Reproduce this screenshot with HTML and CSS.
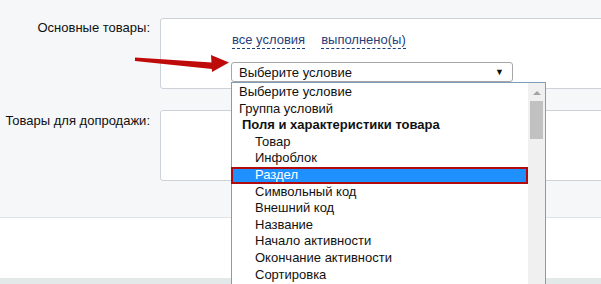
FILE: index.html
```html
<!DOCTYPE html>
<html lang="ru">
<head>
<meta charset="utf-8">
<link rel="stylesheet" href="styles.css">
</head>
<body>
<div class="page">
  <div class="form">
    <div class="row row-first">
      <div class="label">Основные товары:</div>
      <div class="box">
        <div class="links">
          <span class="link">все условия</span>
          <span class="link">выполнено(ы)</span>
        </div>
        <div class="select">
          <span>Выберите условие</span>
          <span class="caret">▼</span>
        </div>
      </div>
    </div>
    <div class="row row-second">
      <div class="label">Товары для допродажи:</div>
      <div class="box"></div>
    </div>
  </div>
  <div class="footer"></div>
  <div class="strip"></div>

  <div class="dropdown">
    <div class="options">
      <div class="opt">Выберите условие</div>
      <div class="opt">Группа условий</div>
      <div class="group">Поля и характеристики товара</div>
      <div class="opt sub">Товар</div>
      <div class="opt sub">Инфоблок</div>
      <div class="opt sub selected">Раздел</div>
      <div class="opt sub">Символьный код</div>
      <div class="opt sub">Внешний код</div>
      <div class="opt sub">Название</div>
      <div class="opt sub">Начало активности</div>
      <div class="opt sub">Окончание активности</div>
      <div class="opt sub">Сортировка</div>
    </div>
    <div class="scrollbar">
      <div class="up"></div>
      <div class="thumb"></div>
    </div>
  </div>

  <svg class="pointer" width="110" height="30" viewBox="130 48 110 30">
    <polygon points="135,57.5 212,62.5 212,69 135,61" fill="#bf0a0a"/>
    <polygon points="211,55 229,62.5 212,72" fill="#bf0a0a"/>
  </svg>
</div>
</body>
</html>
```

FILE: styles.css
```css
html, body {
  margin: 0;
  padding: 0;
  overflow: hidden;
}
body {
  background: #f5f7f8;
  font-family: "Liberation Sans", Arial, sans-serif;
  font-size: 13px;
  color: #111;
}
.page {
  position: relative;
  width: 601px;
  height: 284px;
  overflow: hidden;
}
.form {
  height: 217px;
  border-bottom: 1px solid #dde4ea;
  background: #f5f7f8;
}
.row {
  display: flex;
  gap: 10px;
}
.row-first {
  padding-top: 18px;
}
.row-second {
  padding-top: 21px;
}
.label {
  width: 150px;
  flex: none;
  text-align: right;
  padding-top: 2px;
  line-height: 15px;
}
.row-second .label {
  padding-top: 3px;
}
.box {
  flex: none;
  width: 460px;
  height: 71px;
  box-sizing: border-box;
  background: #fff;
  border: 1px solid #cdd2d8;
  border-radius: 3px;
  padding-left: 71px;
  padding-top: 13px;
}
.links {
  display: flex;
  gap: 16px;
  line-height: 15px;
  height: 17px;
}
.link {
  color: #1f3f7a;
  border-bottom: 1px dashed #1f3f7a;
  padding-bottom: 2px;
}
.select {
  margin-top: 13px;
  margin-left: -1px;
  width: 282px;
  height: 20px;
  box-sizing: border-box;
  border: 1px solid #a6a6a6;
  border-radius: 3px;
  background: #fff;
  display: flex;
  justify-content: space-between;
  align-items: center;
  padding: 0 8px 0 7px;
  color: #111;
}
.caret {
  font-size: 9px;
}
.footer {
  height: 60px;
  background: #fff;
}
.strip {
  height: 6px;
  background: #e3e8e9;
}
.dropdown {
  position: absolute;
  left: 231px;
  top: 82px;
  width: 315px;
  height: 210px;
  box-sizing: border-box;
  background: #fff;
  border: 1px solid #7f9db9;
  display: flex;
  color: #111;
}
.options {
  flex: 1;
  padding-top: 1px;
}
.opt, .group {
  height: 16.6px;
  line-height: 16.6px;
  padding-left: 7px;
  white-space: nowrap;
}
.group {
  font-weight: bold;
  padding-left: 10px;
}
.sub {
  padding-left: 23px;
}
.selected {
  background: #1e90ff;
  color: #fff;
  box-shadow: inset 0 0 0 2px #b30b0b;
  margin-left: -1px;
  padding-left: 24px;
}
.scrollbar {
  width: 17px;
  background: #f0f0f0;
  position: relative;
}
.up {
  position: absolute;
  left: 5px;
  top: 8px;
  width: 0;
  height: 0;
  border-left: 4px solid transparent;
  border-right: 4px solid transparent;
  border-bottom: 4px solid #a3a3a3;
}
.thumb {
  position: absolute;
  left: 2px;
  top: 18px;
  width: 13px;
  height: 38px;
  background: #c1c1c1;
}
.pointer {
  position: absolute;
  left: 130px;
  top: 48px;
}
```
